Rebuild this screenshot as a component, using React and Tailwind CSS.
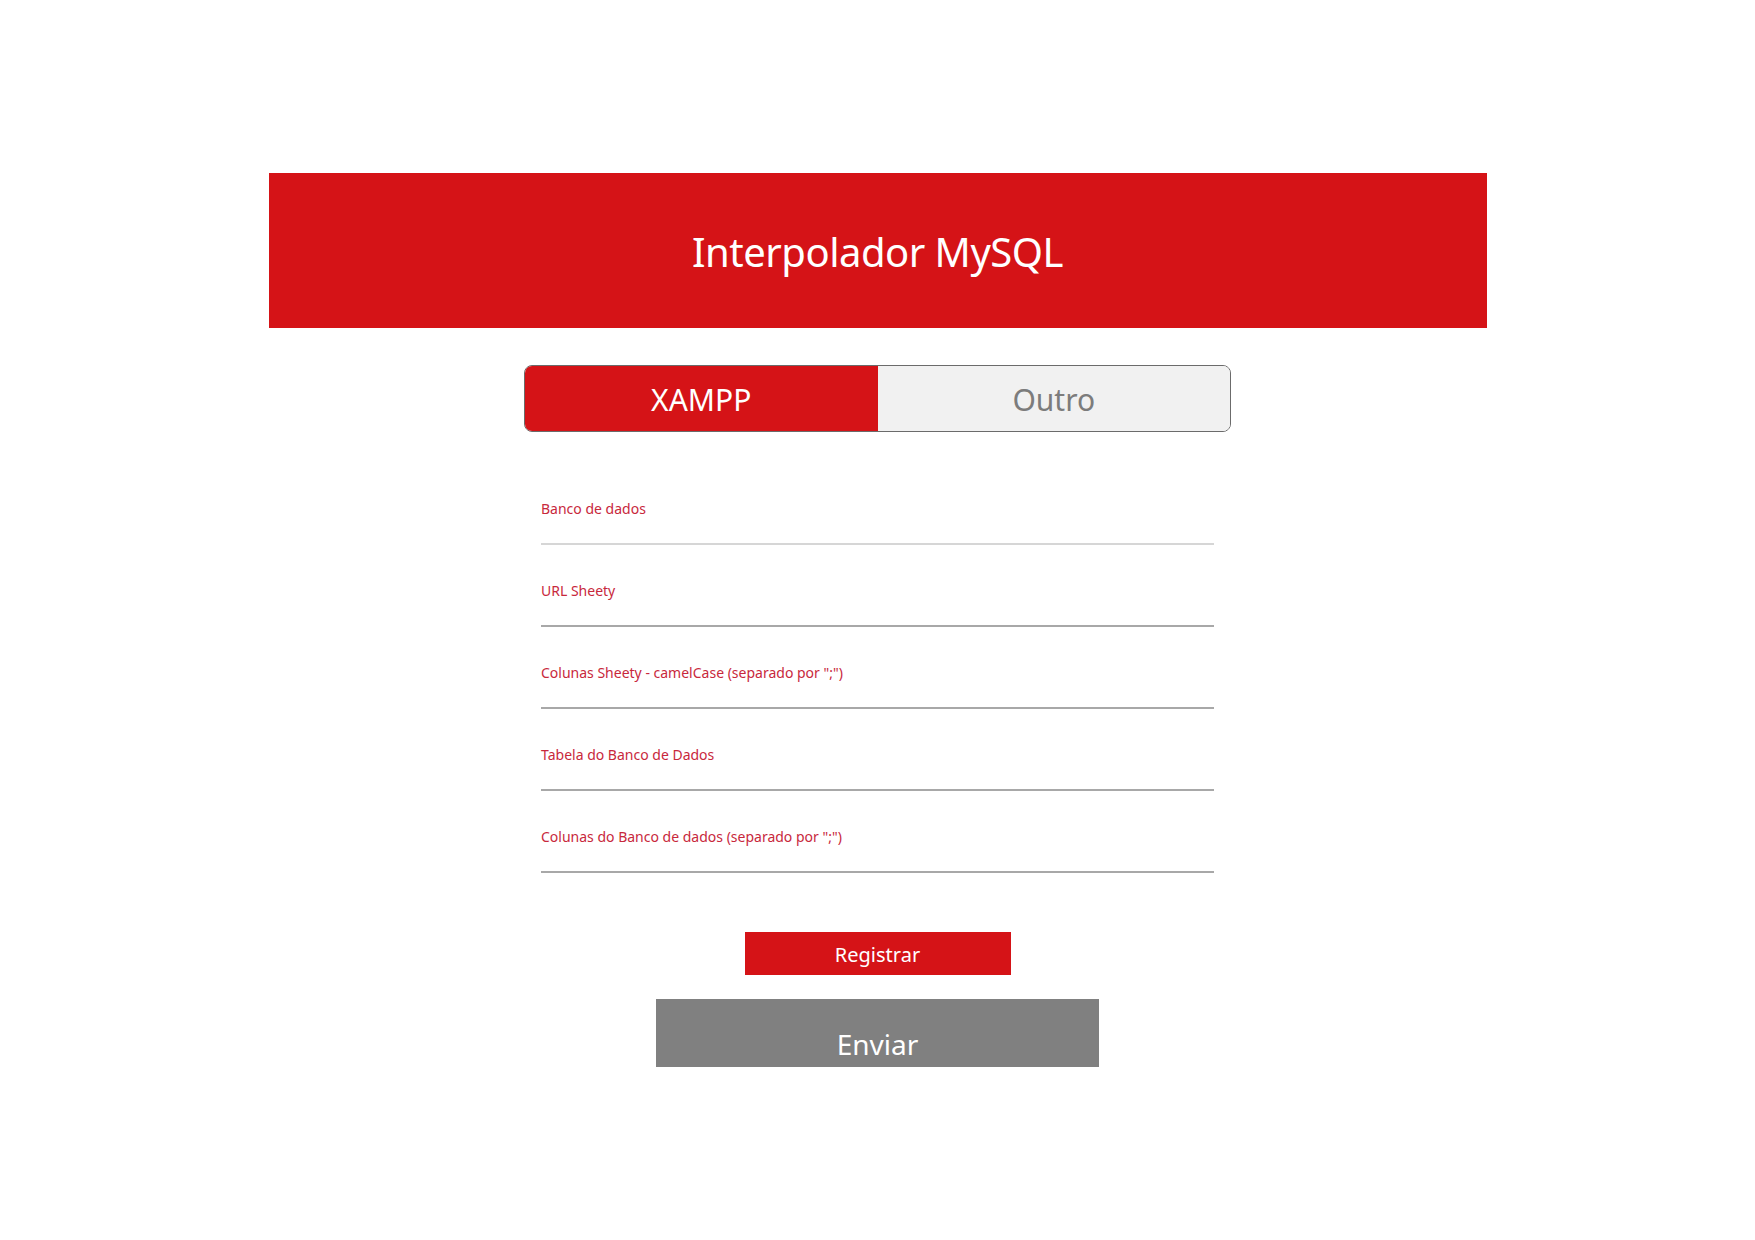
import React from "react";

const fields = [
  { label: "Banco de dados", line: "border-[#d6d6d6]" },
  { label: "URL Sheety", line: "border-[#a8a8a8]" },
  { label: 'Colunas Sheety - camelCase (separado por ";")', line: "border-[#a8a8a8]" },
  { label: "Tabela do Banco de Dados", line: "border-[#a8a8a8]" },
  { label: 'Colunas do Banco de dados (separado por ";")', line: "border-[#a8a8a8]" },
];

export default function App() {
  return (
    <div
      className="min-h-[1240px] w-full bg-white flex flex-col items-center pt-[173px]"
      style={{ fontFamily: '"Noto Sans", "Open Sans", sans-serif' }}
    >
      <div className="w-[1218px] h-[155px] bg-[#d51317] flex items-center justify-center">
        <h1 className="text-white text-[40px] leading-none tracking-[-0.5px] pt-[2px]">Interpolador MySQL</h1>
      </div>

      <div className="mt-[37px] w-[707px] h-[67px] flex rounded-[8px] border border-[#6b6b6b] overflow-hidden">
        <button className="w-1/2 h-full bg-[#d51317] text-white text-[30px] leading-none flex items-center justify-center pt-[2px]">
          XAMPP
        </button>
        <button className="w-1/2 h-full bg-[#f1f1f1] text-[#7c7c7c] text-[30px] leading-none flex items-center justify-center pt-[2px]">
          Outro
        </button>
      </div>

      <div className="mt-[31px] w-[673px] flex flex-col">
        {fields.map((f) => (
          <div key={f.label} className={`pt-[36px] border-b-2 ${f.line}`}>
            <div className="text-[14px] leading-[20px] text-[#c8283c]">{f.label}</div>
            <div className="h-[24px]" />
          </div>
        ))}
      </div>

      <button className="mt-[59px] w-[266px] h-[43px] bg-[#d51317] text-white text-[20px] leading-none flex items-center justify-center pt-[2px]">
        Registrar
      </button>
      <button className="mt-[24px] w-[443px] h-[68px] bg-[#808080] text-white text-[28px] leading-none flex items-center justify-center pt-[22px]">
        Enviar
      </button>
    </div>
  );
}
